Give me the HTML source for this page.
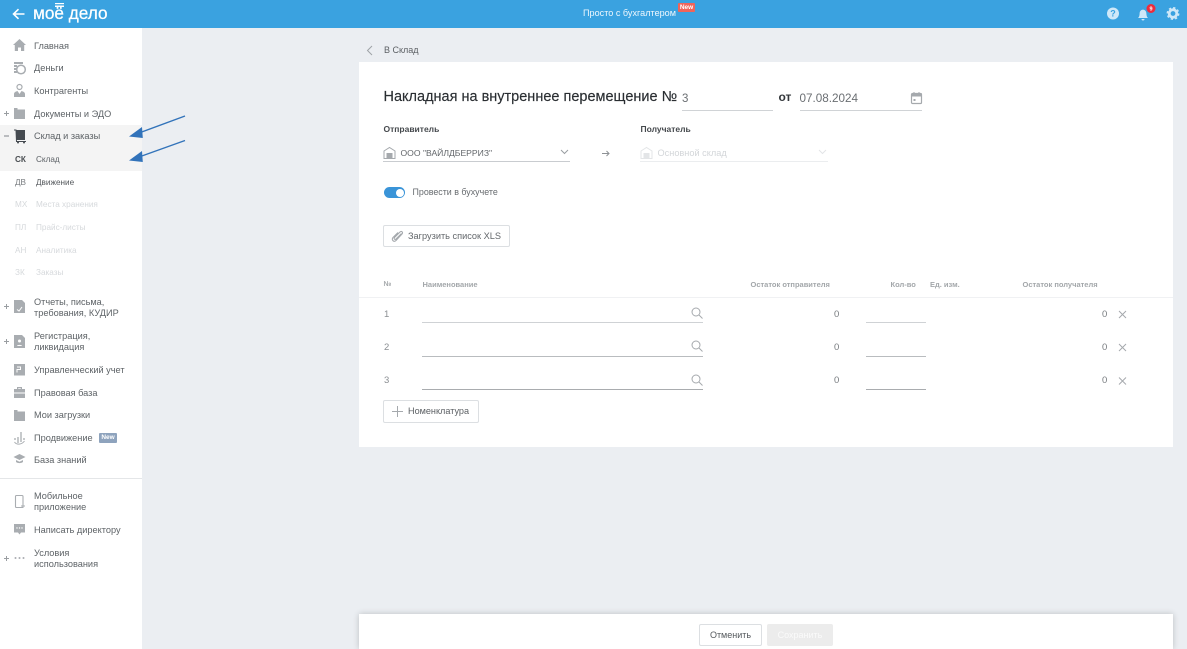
<!DOCTYPE html>
<html lang="ru"><head><meta charset="utf-8"><style>
html,body{margin:0;padding:0}
body{width:1187px;height:649px;overflow:hidden;position:relative;background:#ebeef2;font-family:"Liberation Sans",sans-serif;color:#5c6166}
#p{position:absolute;left:0;top:0;width:1187px;height:649px;filter:blur(.3px)}
.t{position:absolute;white-space:nowrap;font-size:9.2px;line-height:11px}
.b{position:absolute}
svg{position:absolute;overflow:visible}
.m{color:#5e6367}
.s{font-size:8.2px}
.f{color:#d6d9dc}
.h{font-size:7.5px;font-weight:bold;color:#a3a7aa}
.n{font-size:9.5px;color:#8b8f93}
.btn{position:absolute;background:#fff;border:1px solid #dcdfe2;border-radius:2px;box-sizing:border-box}
</style></head><body><div id="p">
<div class="b" style="left:0;top:0;width:1187px;height:28px;background:#3aa2e0"></div>
<div class="t" style="left:33px;top:3px;font-size:17.2px;line-height:20px;color:#fff;-webkit-text-stroke:.25px #fff">моё дело</div>
<svg style="left:0;top:0" width="120" height="28"><path d="M24.500 14H14M18.500 9.200L13.500 14l5 4.800" fill="none" stroke="#fff" stroke-width="1.600"/><rect x="55" y="3" width="9" height="1.200" fill="#fff"/><rect x="55" y="5.500" width="9" height="1.500" fill="#fff"/></svg>
<div class="t" style="left:583px;top:8px;font-size:9.100px;color:#eef7fd">Просто с бухгалтером</div>
<div class="b" style="left:678px;top:3px;width:17px;height:9px;background:#f0645a;border-radius:1px;color:#fff;font-size:6.500px;line-height:9px;font-weight:bold;text-align:center">New</div>
<svg style="left:1100px;top:4px" width="80" height="20"><circle cx="13" cy="9.500" r="6" fill="#cfe8f8"/><text x="13" y="12.500" font-size="9" font-weight="bold" font-family="Liberation Sans" fill="#3aa2e0" text-anchor="middle">?</text><path d="M38 14h10c-1.300-1.200-1.500-2.500-1.600-4.500-.1-2.200-1.200-3.600-3.400-3.900-2.200.3-3.300 1.700-3.400 3.900-.1 2-.3 3.300-1.600 4.500zM41.500 15h3a1.500 1.500 0 0 1-3 0z" fill="#cfe8f8"/><circle cx="51" cy="4.500" r="4.500" fill="#ee2b3c"/><text x="51" y="6.500" font-size="5.500" font-weight="bold" font-family="Liberation Sans" fill="#fff" text-anchor="middle">9</text><circle cx="73" cy="9.500" r="3.800" fill="none" stroke="#cfe8f8" stroke-width="2.800"/><circle cx="73" cy="9.500" r="5.700" fill="none" stroke="#cfe8f8" stroke-width="1.500" stroke-dasharray="2.300 2.170"/></svg>

<div class="b" style="left:0;top:28px;width:142px;height:621px;background:#fff"></div>
<div class="b" style="left:0;top:125px;width:142px;height:46px;background:#f4f4f4"></div>
<div class="b" style="left:0;top:478px;width:142px;height:1px;background:#e4e6e8"></div>

<svg style="left:0;top:28px" width="142" height="560" fill="#a9adb1">
<path d="M19.500 11l6.500 6h-1.800v6h-3.200v-3.500h-3v3.500h-3.200v-6H13z"/>
<path d="M14 34h9v2h-9zM14 37h3v2h-3zM14 40h3v2h-3zM14 43h3v2h-3z"/><circle cx="21" cy="41.500" r="4.300" fill="none" stroke="#a9adb1" stroke-width="1.500"/>
<circle cx="19.500" cy="59" r="2.500" fill="none" stroke="#a9adb1" stroke-width="1.200"/><path d="M14 69v-3c0-1.500 1.500-2.500 3.500-3l2 3 2-3c2 .5 3.500 1.500 3.500 3v3z"/>
<path d="M14 80h3.500v1.500H25V91H14z"/>
<path d="M4 85.500h5M6.500 83v5" stroke="#9a9ea2" stroke-width="1" fill="none"/>
<path d="M4 108h5" stroke="#80848a" stroke-width="1" fill="none"/>
<rect x="16.500" y="102" width="8.500" height="10" fill="#454a50"/><path d="M14 102h2l.5 11.500H26" stroke="#454a50" fill="none"/><circle cx="18" cy="114.500" r="1" fill="#454a50"/><circle cx="24" cy="114.500" r="1" fill="#454a50"/>
<path d="M4 278.500h5M6.500 276v5" stroke="#9a9ea2" stroke-width="1" fill="none"/>
<path d="M14 272h8l3 3v10H14z"/><path d="M17 281.500l2 1.500 3-4" stroke="#fff" fill="none"/>
<path d="M4 313.500h5M6.500 311v5" stroke="#9a9ea2" stroke-width="1" fill="none"/>
<path d="M14 307h8l3 3v10H14z"/><circle cx="19.500" cy="313" r="1.500" fill="#fff"/><path d="M17 318c0-1.500 5-1.500 5 0z" fill="#fff"/>
<path d="M14 336h11v11.500H14z"/><path d="M17 339h3.500v2.500H17v3" stroke="#fff" fill="none"/>
<path d="M14 361h11v9H14zM17 361v-2h5v2h-1.200v-.8h-2.600v.8z"/><path d="M14 365h11" stroke="#fff" fill="none"/>
<path d="M14 382h3.500v1.500H25V393H14z"/>
<path d="M15 412v-2M18 415v-6M21 414v-10M24 412v-2" stroke="#a9adb1" stroke-width="1.300" fill="none"/><path d="M14.500 414c2 3 7 3 10-1" stroke="#a9adb1" fill="none"/>
<path d="M19.500 426l6 3-6 3-6-3z"/><path d="M16 432v2c2 1.500 5 1.500 7 0v-2l-3.500 1.700z"/>
<rect x="15.500" y="467.500" width="7.500" height="12" rx="1" fill="none" stroke="#a9adb1" stroke-width="1.100"/><path d="M21 478h4M23 476v4" stroke="#a9adb1" fill="#fff"/>
<path d="M14 496h11v8.500h-4l-1.500 2-1.500-2h-4z"/><circle cx="17" cy="500" r=".7" fill="#fff"/><circle cx="19.500" cy="500" r=".7" fill="#fff"/><circle cx="22" cy="500" r=".7" fill="#fff"/>
<path d="M4 530.500h5M6.500 528v5" stroke="#9a9ea2" stroke-width="1" fill="none"/>
<circle cx="15.500" cy="530" r="1"/><circle cx="19.500" cy="530" r="1"/><circle cx="23.500" cy="530" r="1"/>
</svg>

<div class="t m" style="left:34px;top:41px">Главная</div>
<div class="t m" style="left:34px;top:63px">Деньги</div>
<div class="t m" style="left:34px;top:86px">Контрагенты</div>
<div class="t m" style="left:34px;top:109px">Документы и ЭДО</div>
<div class="t m" style="left:34px;top:131px">Склад и заказы</div>
<div class="t s" style="left:15px;top:154px;color:#4a4e52;font-weight:bold">СК</div>
<div class="t s" style="left:36px;top:154px">Склад</div>
<div class="t s" style="left:15px;top:177px;color:#777b7f">ДВ</div>
<div class="t s" style="left:36px;top:177px;color:#55595d">Движение</div>
<div class="t s f" style="left:15px;top:199px">МХ</div><div class="t s f" style="left:36px;top:199px">Места хранения</div>
<div class="t s f" style="left:15px;top:222px">ПЛ</div><div class="t s f" style="left:36px;top:222px">Прайс-листы</div>
<div class="t s f" style="left:15px;top:245px">АН</div><div class="t s f" style="left:36px;top:245px">Аналитика</div>
<div class="t s f" style="left:15px;top:267px">ЗК</div><div class="t s f" style="left:36px;top:267px">Заказы</div>
<div class="t m" style="left:34px;top:297px">Отчеты, письма,<br>требования, КУДИР</div>
<div class="t m" style="left:34px;top:331px">Регистрация,<br>ликвидация</div>
<div class="t m" style="left:34px;top:365px">Управленческий учет</div>
<div class="t m" style="left:34px;top:388px">Правовая база</div>
<div class="t m" style="left:34px;top:410px">Мои загрузки</div>
<div class="t m" style="left:34px;top:433px">Продвижение</div>
<div class="b" style="left:99px;top:433px;width:18px;height:10px;background:#8ea3bd;border-radius:1px;color:#fff;font-size:6.500px;line-height:10px;font-weight:bold;text-align:center">New</div>
<div class="t m" style="left:34px;top:455px">База знаний</div>
<div class="t m" style="left:34px;top:491px">Мобильное<br>приложение</div>
<div class="t m" style="left:34px;top:525px">Написать директору</div>
<div class="t m" style="left:34px;top:548px">Условия<br>использования</div>

<svg style="left:125px;top:110px" width="65" height="55"><path d="M60 6L14 23" stroke="#3273ba" stroke-width="1.400"/><path d="M4 26.500l13-9.500.800 11z" fill="#3273ba"/><path d="M60 30.500L14 47" stroke="#3273ba" stroke-width="1.400"/><path d="M4 50.500l13-9.500.800 11z" fill="#3273ba"/></svg>

<svg style="left:365px;top:45px" width="10" height="11"><path d="M7 1L2.500 5.500 7 10" fill="none" stroke="#9fa3a7" stroke-width="1"/></svg>
<div class="t" style="left:384px;top:45px;font-size:9px;color:#5d6165">В Склад</div>

<div class="b" style="left:359px;top:62px;width:814px;height:385px;background:#fff"></div>
<div class="t" style="left:383.500px;top:88px;font-size:14.500px;line-height:18px;color:#2a2e32;-webkit-text-stroke:.15px #2a2e32">Накладная на внутреннее перемещение №</div>
<div class="t" style="left:682px;top:92px;font-size:11.500px;line-height:14px;color:#6b6f73">3</div>
<div class="b" style="left:682px;top:109.500px;width:91px;height:1px;background:#d0d3d6"></div>
<div class="t" style="left:778.500px;top:90px;font-size:12px;line-height:14px;font-weight:bold;color:#33373b">от</div>
<div class="t" style="left:799.500px;top:92px;font-size:11.700px;line-height:14px;color:#6b6f73">07.08.2024</div>
<div class="b" style="left:800px;top:109.500px;width:122px;height:1px;background:#d0d3d6"></div>
<svg style="left:910px;top:91px" width="13" height="14"><rect x="1.500" y="2.500" width="10" height="10" rx="1" fill="none" stroke="#a5a9ad" stroke-width="1.200"/><rect x="1.500" y="2.500" width="10" height="3" fill="#a5a9ad"/><rect x="3.500" y="8" width="2" height="2" fill="#a5a9ad"/><path d="M4 1v2M9 1v2" stroke="#a5a9ad"/></svg>

<div class="t" style="left:383.500px;top:124px;font-size:8.500px;font-weight:bold;color:#45494d">Отправитель</div>
<div class="t" style="left:640.500px;top:124px;font-size:8.500px;font-weight:bold;color:#45494d">Получатель</div>
<svg style="left:383px;top:146px" width="13" height="13"><path d="M1 5L6.500 1.500 12 5v7.500H1z" fill="none" stroke="#a5a9ad"/><rect x="3.500" y="7" width="6" height="5.500" fill="#a5a9ad"/></svg>
<div class="t" style="left:400.500px;top:148px;font-size:8.600px;color:#62666a">ООО "ВАЙЛДБЕРРИЗ"</div>
<svg style="left:560px;top:149px" width="9" height="6"><path d="M1 1l3.500 3.500L8 1" fill="none" stroke="#9a9ea2"/></svg>
<div class="b" style="left:383px;top:161px;width:187px;height:1px;background:#c9ccd0"></div>
<svg style="left:601px;top:149px" width="10" height="9"><path d="M1 4.500h7M5.500 2l2.500 2.500L5.500 7" fill="none" stroke="#8d9195"/></svg>
<svg style="left:640px;top:146px" width="13" height="13"><path d="M1 5L6.500 1.500 12 5v7.500H1z" fill="none" stroke="#e3e5e7"/><rect x="3.500" y="7" width="6" height="5.500" fill="#e3e5e7"/></svg>
<div class="t" style="left:657.500px;top:148px;font-size:9.200px;color:#d3d6d9">Основной склад</div>
<svg style="left:818px;top:149px" width="9" height="6"><path d="M1 1l3.500 3.500L8 1" fill="none" stroke="#e3e5e7"/></svg>
<div class="b" style="left:640px;top:161px;width:188px;height:1px;background:#ebedef"></div>

<div class="b" style="left:383.500px;top:186.500px;width:21.500px;height:11.500px;background:#3a94d8;border-radius:6px"></div>
<div class="b" style="left:395.500px;top:188.500px;width:8px;height:8px;background:#fff;border-radius:50%"></div>
<div class="t" style="left:412.500px;top:187px;font-size:8.900px;color:#676b6f">Провести в бухучете</div>

<div class="btn" style="left:383px;top:225px;width:127px;height:22px"></div>
<svg style="left:391px;top:229px" width="13" height="14"><path d="M10.500 4.500L5 10c-1 1-2.500 0-1.500-1.500L9 3c1.500-1.500 3.500 .5 2 2l-6 6.500c-2 2-5-.5-3-3l5-5" fill="none" stroke="#a5a9ad" stroke-width="1.100"/></svg>
<div class="t" style="left:408px;top:231px;font-size:9.200px;color:#63676b">Загрузить список XLS</div>

<div class="t h" style="left:383.500px;top:279px;font-size:7px">№</div>
<div class="t h" style="left:422.500px;top:279px">Наименование</div>
<div class="t h" style="left:750.500px;top:279px">Остаток отправителя</div>
<div class="t h" style="left:890.500px;top:279px">Кол-во</div>
<div class="t h" style="left:930px;top:279px">Ед. изм.</div>
<div class="t h" style="left:1022.500px;top:279px">Остаток получателя</div>
<div class="b" style="left:359px;top:296.500px;width:814px;height:1px;background:#f0f1f3"></div>

<div class="t n" style="left:384px;top:309px">1</div>
<div class="t n" style="left:384px;top:342px">2</div>
<div class="t n" style="left:384px;top:375px">3</div>

<div class="b" style="left:422px;top:322px;width:281px;height:1px;background:#cfd2d5"></div>
<div class="b" style="left:422px;top:356px;width:281px;height:1px;background:#b9bcbf"></div>
<div class="b" style="left:422px;top:389px;width:281px;height:1px;background:#a9acaf"></div>
<div class="b" style="left:866px;top:322px;width:60px;height:1px;background:#cfd2d5"></div>
<div class="b" style="left:866px;top:356px;width:60px;height:1px;background:#b9bcbf"></div>
<div class="b" style="left:866px;top:389px;width:60px;height:1px;background:#a9acaf"></div>

<svg style="left:690px;top:306px" width="14" height="80" fill="none" stroke="#a5a9ad" stroke-width="1"><g><circle cx="6" cy="6" r="4"/><path d="M9 9l3.500 3.500"/></g><g transform="translate(0,33)"><circle cx="6" cy="6" r="4"/><path d="M9 9l3.500 3.500"/></g><g transform="translate(0,67)"><circle cx="6" cy="6" r="4"/><path d="M9 9l3.500 3.500"/></g></svg>
<svg style="left:1117.500px;top:309.500px" width="9" height="76" fill="none" stroke="#a5a9ad" stroke-width="1"><path d="M1 1l7 7M8 1l-7 7"/><path d="M1 34l7 7M8 34l-7 7"/><path d="M1 67.500l7 7M8 67.500l-7 7"/></svg>

<div class="t n" style="left:834px;top:309px;color:#777b7f">0</div>
<div class="t n" style="left:834px;top:342px;color:#777b7f">0</div>
<div class="t n" style="left:834px;top:375px;color:#777b7f">0</div>
<div class="t n" style="left:1102px;top:309px;color:#777b7f">0</div>
<div class="t n" style="left:1102px;top:342px;color:#777b7f">0</div>
<div class="t n" style="left:1102px;top:375px;color:#777b7f">0</div>

<div class="btn" style="left:383px;top:400px;width:96px;height:23px"></div>
<svg style="left:391px;top:405px" width="13" height="13"><path d="M6.500 1v11M1 6.500h11" stroke="#a5a9ad" stroke-width="1"/></svg>
<div class="t" style="left:408px;top:406px;font-size:9.100px;color:#5c6064">Номенклатура</div>

<div class="b" style="left:359px;top:614px;width:814px;height:35px;background:#fff;box-shadow:0 0 6px rgba(0,0,0,.2)"></div>
<div class="btn" style="left:699px;top:624px;width:63px;height:22px;text-align:center;font-size:9px;line-height:20px;color:#55595d">Отменить</div>
<div class="b" style="left:767px;top:624px;width:66px;height:22px;background:#ececec;border-radius:2px;text-align:center;font-size:9px;line-height:22px;color:#fafafa">Сохранить</div>
</div></body></html>
